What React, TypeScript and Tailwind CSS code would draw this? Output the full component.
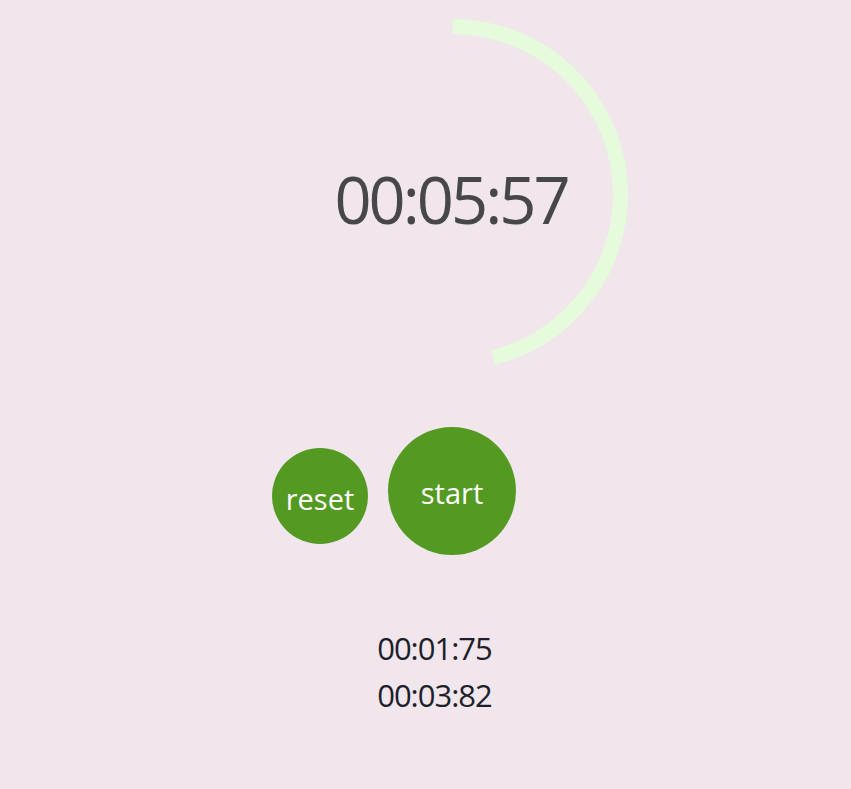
import React from 'react';

// Stopwatch face: progress ring + readout, controls, lap list
const R = 168;
const STROKE = 15;
const SIZE = (R + STROKE / 2) * 2;
const C = 2 * Math.PI * R;
const progress = 0.461;

const laps = ['00:01:75', '00:03:82'];

export default function App() {
    return (
        <div
            className="min-h-[789px] w-full bg-[#f0e6ec] flex flex-col items-center pt-[19px] pl-[53px]"
            style={{ fontFamily: '"Open Sans", "Noto Sans", sans-serif' }}
        >
            {/* Ring + time */}
            <div className="relative" style={{ width: SIZE, height: SIZE }}>
                <svg width={SIZE} height={SIZE} viewBox={`0 0 ${SIZE} ${SIZE}`} className="-rotate-90">
                    <circle
                        cx={SIZE / 2}
                        cy={SIZE / 2}
                        r={R}
                        fill="none"
                        stroke="#e6fbdc"
                        strokeWidth={STROKE}
                        strokeDasharray={`${C * progress} ${C}`}
                    />
                </svg>
                <div className="absolute inset-0 flex items-center justify-center pt-[10px] pr-[2px]">
                    <span className="text-[65px] leading-none tracking-[-3px] text-[#47464b]">00:05:57</span>
                </div>
            </div>

            {/* Controls */}
            <div className="grid grid-cols-[1fr_auto_1fr] w-full mt-[57px]">
                <div className="flex justify-end pr-[20px] pt-[21px]">
                    <button className="w-[96px] h-[96px] rounded-full bg-[#549a22] text-white text-[29px] leading-none flex items-center justify-center pt-[4px]">
                        reset
                    </button>
                </div>
                <button className="w-[128px] h-[128px] rounded-full bg-[#549a22] text-white text-[29px] leading-none flex items-center justify-center pt-[2px]">
                    start
                </button>
                <div />
            </div>

            {/* Laps */}
            <ul className="mt-[70px] pr-[35px] flex flex-col items-center text-[#1f1e2b]">
                {laps.map((lap) => (
                    <li key={lap} className="text-[31px] leading-[47px] tracking-[-1px]">
                        {lap}
                    </li>
                ))}
            </ul>
        </div>
    );
}
